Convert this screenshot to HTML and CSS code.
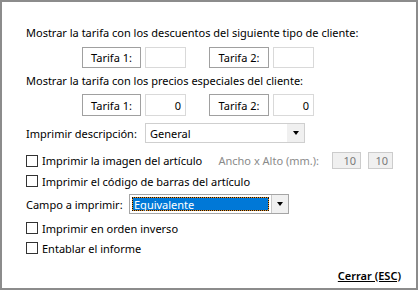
FILE: index.html
```html
<!DOCTYPE html>
<html lang="es">
<head>
    <meta charset="UTF-8">
    <title>Opciones de impresión</title>
    <link rel="stylesheet" href="styles.css">
</head>
<body>
    <div class="dialog">
        <p class="line">Mostrar la tarifa con los descuentos del siguiente tipo de cliente:</p>
        <div class="row tarifas tarifas-1">
            <span class="tag">Tarifa 1:</span><span class="field"></span>
            <span class="tag tag-2">Tarifa 2:</span><span class="field"></span>
        </div>
        <p class="line line-2">Mostrar la tarifa con los precios especiales del cliente:</p>
        <div class="row tarifas tarifas-2">
            <span class="tag">Tarifa 1:</span><span class="field">0</span>
            <span class="tag tag-2">Tarifa 2:</span><span class="field">0</span>
        </div>
        <div class="row desc-row">
            <span class="desc-label">Imprimir descripción:</span>
            <div class="select">
                <span class="select-value">General</span>
                <span class="select-btn"><i class="caret"></i></span>
            </div>
        </div>
        <div class="row check-row check-img">
            <span class="check"></span><span class="check-label">Imprimir la imagen del artículo</span>
            <div class="size">
                <span class="size-label">Ancho x Alto (mm.):</span>
                <span class="size-field">10</span>
                <span class="size-field size-field-2">10</span>
            </div>
        </div>
        <div class="row check-row check-bar">
            <span class="check"></span><span class="check-label">Imprimir el código de barras del artículo</span>
        </div>
        <div class="row campo-row">
            <span class="campo-label">Campo a imprimir:</span>
            <div class="combo">
                <span class="combo-value">Equivalente</span>
                <span class="combo-btn"><i class="caret"></i></span>
            </div>
        </div>
        <div class="row check-row check-inv">
            <span class="check"></span><span class="check-label">Imprimir en orden inverso</span>
        </div>
        <div class="row check-row check-tab">
            <span class="check"></span><span class="check-label">Entablar el informe</span>
        </div>
        <div class="row close-row">
            <a class="close-link" href="#">Cerrar (ESC)</a>
        </div>
    </div>
</body>
</html>
```

FILE: styles.css
```css
body { margin: 0; padding: 0; background-color: #fff; font-family: "Noto Sans", "Open Sans", sans-serif; font-size: 11px; color: #000; }
.dialog { width: 418px; height: 290px; box-sizing: border-box; border: 2px solid #8c8c8c; padding: 23px 15px 0 24px; display: flex; flex-direction: column; background-color: #fff; }
.line { margin: 0; height: 15px; line-height: 15px; white-space: nowrap; }
.line-2 { margin-top: 5px; }
.row { display: flex; align-items: center; white-space: nowrap; }
.tarifas { padding-left: 56px; height: 21px; }
.tarifas-1 { margin-top: 7px; }
.tarifas-2 { margin-top: 6px; height: 22px; }
.tag { width: 59px; height: 100%; box-sizing: border-box; border: 1px solid #a0a0a0; display: flex; align-items: center; justify-content: center; }
.tag-2 { margin-left: 23px; width: 60px; }
.field { width: 41px; height: 100%; box-sizing: border-box; margin-left: 4px; border: 1px solid #d9d9d9; display: flex; align-items: center; justify-content: flex-end; padding-right: 4px; }
.desc-row { margin-top: 7px; height: 20px; }
.desc-label { width: 119px; }
.select { width: 160px; height: 100%; box-sizing: border-box; border: 1px solid #cfcfcf; display: flex; }
.select-value { flex: 1; padding-left: 4px; display: flex; align-items: center; }
.select-btn { width: 17px; background-color: #f0f0f0; display: flex; align-items: center; justify-content: center; }
.caret { display: block; width: 0; height: 0; border-top: 4px solid #000; border-left: 3.5px solid transparent; border-right: 3.5px solid transparent; }
.check-row { height: 16px; }
.check { width: 12px; height: 12px; box-sizing: border-box; border: 1px solid #333; background-color: #fff; flex-shrink: 0; }
.check-label { margin-left: 4px; }
.check-img { margin-top: 9px; height: 17px; }
.check-bar { margin-top: 4px; }
.check-inv { margin-top: 6px; }
.check-tab { margin-top: 4px; }
.size { margin-left: auto; margin-right: 8px; display: flex; align-items: center; height: 100%; }
.size-label { color: #8a8a8a; margin-right: 13px; }
.size-field { width: 29px; height: 100%; box-sizing: border-box; border: 1px solid #cccccc; background-color: #f0f0f0; color: #7a7a7a; display: flex; align-items: center; justify-content: flex-end; padding-right: 4px; }
.size-field-2 { width: 25px; margin-left: 7px; }
.campo-row { margin-top: 5px; height: 20px; }
.campo-label { width: 103px; }
.combo { width: 160px; height: 100%; box-sizing: border-box; border: 1px solid #a5a5a5; display: flex; }
.combo-value { flex: 1; margin: 2px; border: 1px dotted #111; background: linear-gradient(#0078d7, #0078d7) padding-box, #e8962c; color: #fff; padding-left: 1px; display: flex; align-items: center; }
.combo-btn { width: 16px; background-color: #f0f0f0; border-left: 1px solid #c8c8c8; display: flex; align-items: center; justify-content: center; }
.close-row { margin-top: 11px; height: 16px; justify-content: flex-end; }
.close-link { color: #000; font-weight: 600; text-decoration: underline; }
```
